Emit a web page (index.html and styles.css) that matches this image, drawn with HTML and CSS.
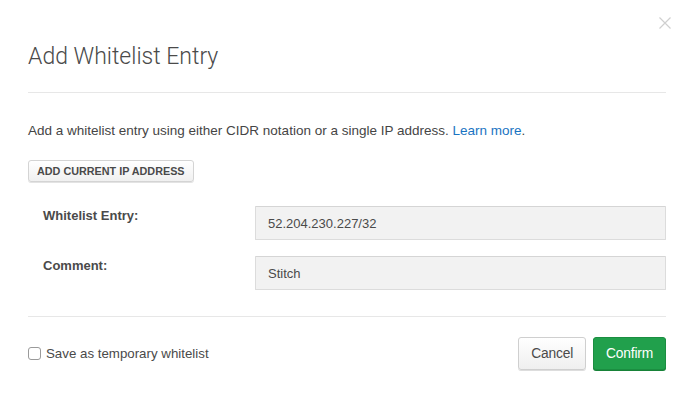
FILE: index.html
```html
<!DOCTYPE html>
<html lang="en">
<head>
    <meta charset="UTF-8">
    <title>Add Whitelist Entry</title>
    <link rel="stylesheet" href="styles.css">
</head>
<body>
<div class="modal">
    <span class="close">
        <svg width="12" height="12" viewBox="0 0 12 12">
            <path d="M0.5 0.5 L11.5 11.5 M11.5 0.5 L0.5 11.5" stroke="#cfcfcf" stroke-width="1.2" fill="none"/>
        </svg>
    </span>
    <div class="header">
        <h1 class="title">Add Whitelist Entry</h1>
    </div>
    <div class="body">
        <p class="intro">Add a whitelist entry using either CIDR notation or a single IP address. <a href="#" class="link">Learn more</a>.</p>
        <button class="btn-small">ADD CURRENT IP ADDRESS</button>
        <div class="form">
            <div class="row">
                <label class="label">Whitelist Entry:</label>
                <input type="text" class="field" value="52.204.230.227/32">
            </div>
            <div class="row">
                <label class="label">Comment:</label>
                <input type="text" class="field" value="Stitch">
            </div>
        </div>
    </div>
    <div class="footer">
        <label class="check">
            <span class="box"></span>
            Save as temporary whitelist
        </label>
        <div class="actions">
            <button class="btn cancel">Cancel</button>
            <button class="btn confirm">Confirm</button>
        </div>
    </div>
</div>
</body>
</html>
```

FILE: styles.css
```css
body {
    margin: 0;
    background: #ffffff;
    font-family: "Liberation Sans", Arial, sans-serif;
    color: #494949;
}

.modal {
    position: relative;
    width: 694px;
    height: 397px;
    padding: 0 28px;
    box-sizing: border-box;
}

.close {
    position: absolute;
    top: 17px;
    right: 23px;
    width: 12px;
    height: 12px;
    display: block;
}

.close svg {
    display: block;
}

.header {
    padding-top: 43px;
    padding-bottom: 22px;
    border-bottom: 1px solid #e7e7e7;
}

.title {
    margin: 0;
    font-family: Roboto, "Liberation Sans", sans-serif;
    font-weight: 300;
    font-size: 23px;
    line-height: 27px;
    color: #4a4a4a;
}

.body {
    padding-top: 29px;
    padding-bottom: 26px;
    border-bottom: 1px solid #e7e7e7;
}

.intro {
    margin: 0 0 20px 0;
    font-size: 13.5px;
    line-height: 18px;
    color: #454545;
}

.link {
    color: #1a74c2;
    text-decoration: none;
}

.btn-small {
    display: block;
    height: 22px;
    padding: 0 8px;
    font-family: "Liberation Sans", Arial, sans-serif;
    font-size: 10.8px;
    font-weight: bold;
    color: #4a4a4a;
    background: linear-gradient(#ffffff, #f0f0f0);
    border: 1px solid #d4d4d4;
    border-radius: 3px;
    box-shadow: 0 1px 0 #e3e3e3;
}

.form {
    padding: 24px 0 0 15px;
    display: flex;
    flex-direction: column;
    gap: 16px;
}

.row {
    display: flex;
    align-items: flex-start;
}

.label {
    width: 212px;
    padding-top: 2px;
    font-size: 13px;
    font-weight: bold;
    color: #4a4a4a;
}

.field {
    flex: 1;
    height: 34px;
    box-sizing: border-box;
    padding: 0 12px;
    font-family: "Liberation Sans", Arial, sans-serif;
    font-size: 13px;
    color: #4a4a4a;
    background: #f2f2f2;
    border: 1px solid #dcdcdc;
    border-top-color: #d5d5d5;
    border-radius: 1px;
    outline: none;
}

.footer {
    display: flex;
    justify-content: space-between;
    align-items: center;
    padding-top: 20px;
}

.check {
    display: flex;
    align-items: center;
    gap: 5px;
    font-size: 13.3px;
    color: #4a4a4a;
}

.box {
    display: block;
    width: 11px;
    height: 11px;
    border: 1px solid #9a9a9a;
    border-radius: 3px;
    background: #ffffff;
}

.actions {
    display: flex;
    gap: 7px;
}

.btn {
    height: 33px;
    padding: 0 12px;
    font-family: "Liberation Sans", Arial, sans-serif;
    font-size: 13.8px;
    letter-spacing: -0.2px;
    border-radius: 3px;
}

.cancel {
    color: #4a4a4a;
    background: linear-gradient(#ffffff, #efefef);
    border: 1px solid #cfcfcf;
    box-shadow: 0 1px 0 #dddddd;
}

.confirm {
    color: #ffffff;
    background: #21a04c;
    border: 1px solid #1b8e41;
    box-shadow: 0 1px 0 #178238;
}
```
